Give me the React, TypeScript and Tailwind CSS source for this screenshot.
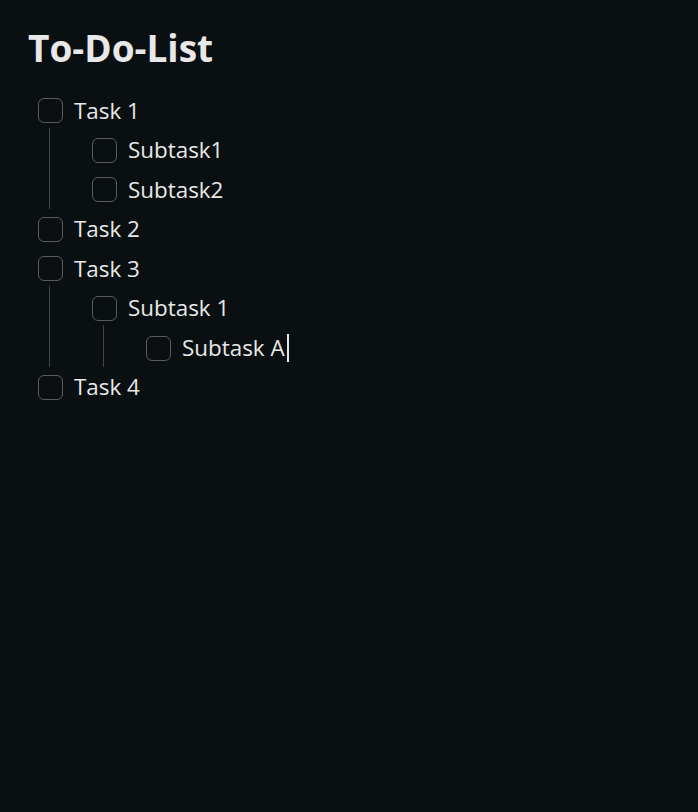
type Item = { label: string; editing?: boolean; children?: Item[] };

const tasks: Item[] = [
  { label: 'Task 1', children: [{ label: 'Subtask1' }, { label: 'Subtask2' }] },
  { label: 'Task 2' },
  {
    label: 'Task 3',
    children: [{ label: 'Subtask 1', children: [{ label: 'Subtask A', editing: true }] }],
  },
  { label: 'Task 4' },
];

function TaskRow({ item }: { item: Item }) {
  return (
    <div>
      <div className="flex h-[39.55px] items-center gap-[11px]">
        <span className="h-[25px] w-[25px] shrink-0 rounded-[6px] border border-[#5b5b5b]" />
        <span className="flex items-center text-[22.4px] leading-none text-[#e8e8e8]">
          {item.label}
          {item.editing && <span className="ml-[2px] inline-block h-[28px] w-[2px] bg-[#e8e8e8]" />}
        </span>
      </div>
      {item.children && (
        <div className="flex">
          <div className="flex w-[54px] shrink-0 pl-[11px]">
            <div className="-mt-[3px] mb-px w-px bg-[#444]" />
          </div>
          <div className="flex-1">
            {item.children.map((c) => (
              <TaskRow key={c.label} item={c} />
            ))}
          </div>
        </div>
      )}
    </div>
  );
}

export default function App() {
  return (
    <div
      className="min-h-[812px] bg-[#0a1012] px-[28px] pt-[28px]"
      style={{ fontFamily: '"Open Sans", "Noto Sans", sans-serif' }}
    >
      <h1 className="text-[37px] font-bold leading-[40px] text-[#e8e8e8]">To-Do-List</h1>
      <div className="mt-[23px] pl-[10px]">
        {tasks.map((t) => (
          <TaskRow key={t.label} item={t} />
        ))}
      </div>
    </div>
  );
}
